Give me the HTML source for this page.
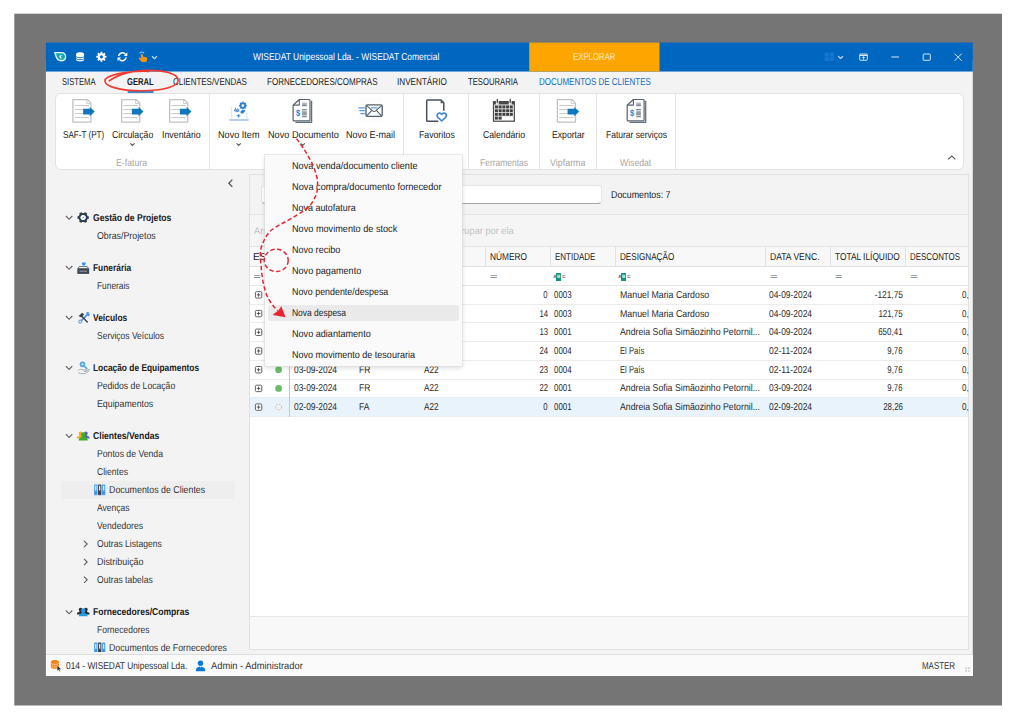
<!DOCTYPE html>
<html lang="pt">
<head>
<meta charset="utf-8">
<title>WISEDAT Unipessoal Lda. - WISEDAT Comercial</title>
<style>
html,body{margin:0;padding:0}
body{width:1024px;height:720px;overflow:hidden;background:#fff;position:relative;font-family:"Liberation Sans",sans-serif;font-size:10px;text-rendering:geometricPrecision;color:#1b1b1b}
.sec{position:absolute;left:0;top:0;width:1024px;height:720px}
.sec div,.sec span,.sec svg,.sec b,.sec i{position:absolute;box-sizing:border-box}
.t{white-space:nowrap;transform-origin:0 50%;line-height:14px;height:14px;font-style:normal}
svg{overflow:visible}
.eq{font-size:12.5px;font-weight:700;color:#8b939a;transform:scaleY(0.62);transform-origin:50% 50%;width:7.3px;text-align:center}
.abc{width:12px;height:8.4px;font-size:4.6px;line-height:8.4px;color:#555}
.abc i{left:0;top:0;font-style:normal;width:3px;text-align:center;font-weight:700}
.abc b{left:3px;top:0;width:5px;height:8.4px;background:#0e9384;color:#e8fffb;text-align:center;font-weight:700;border-radius:0.6px}

</style>
</head>
<body>
<div class="sec" id="frame">
<svg style="left:0;top:0" width="1024" height="720" viewBox="0 0 1024 720"><rect x="14.3" y="13.7" width="987.7" height="691.8" fill="#757575"/><rect x="45.9" y="60" width="926.9" height="616" fill="#f3f3f3"/><rect x="45.9" y="42.5" width="926.9" height="29.05" fill="#0067c0"/><rect x="529.25" y="42.5" width="130.25" height="29.05" fill="#ffa500"/></svg>
</div>
<header class="sec" id="title">
<span class="t" style="left:252.5px;top:51px;color:#ffffff;transform:scaleX(0.845);">WISEDAT Unipessoal Lda. - WISEDAT Comercial</span>
<span class="t" style="left:572.5px;top:51px;color:#ffe9c4;transform:scaleX(0.780);">EXPLORAR</span>
<svg style="left:0;top:0" width="1024" height="720" viewBox="0 0 1024 720" fill="none">
<!-- app logo -->
<path d="M54.7 52.6 L61.2 52.6 C64.2 52.6 65.6 54.5 65.6 56.7 C65.6 59.2 63.8 60.7 61.2 60.7 C58.3 60.7 56.8 59 56.2 56.7 Z" fill="#12a9b4" stroke="#e4f3fb" stroke-width="1.35" stroke-linejoin="round"/>
<path d="M61.9 55.3 A1.7 1.7 0 1 0 61.9 58.3 A1.9 1.9 0 0 1 61.9 55.3 Z" fill="#dff6f6"/>
<!-- database -->
<g fill="#ffffff">
<path d="M76.1 54 C76.1 51.7 84.1 51.7 84.1 54 L84.1 55.7 C84.1 57.9 76.1 57.9 76.1 55.7 Z"/>
<path d="M76.1 56.7 C76.1 58.6 84.1 58.6 84.1 56.7 L84.1 57.9 C84.1 59.8 76.1 59.8 76.1 57.9 Z"/>
<path d="M76.1 58.8 C76.1 60.7 84.1 60.7 84.1 58.8 L84.1 60 C84.1 61.9 76.1 61.9 76.1 60 Z"/>
</g>
<!-- gear -->
<g transform="translate(101.4 56.8)">
<g fill="#ffffff">
<circle r="3.5"/>
<rect x="-0.95" y="-5" width="1.9" height="10" rx="0.3"/>
<rect x="-0.95" y="-5" width="1.9" height="10" rx="0.3" transform="rotate(45)"/>
<rect x="-0.95" y="-5" width="1.9" height="10" rx="0.3" transform="rotate(90)"/>
<rect x="-0.95" y="-5" width="1.9" height="10" rx="0.3" transform="rotate(135)"/>
</g>
<circle r="1.6" fill="#0067c0"/>
</g>
<!-- refresh -->
<g stroke="#ffffff" stroke-width="1.5" stroke-linecap="butt">
<path d="M118.6 56 A3.9 3.9 0 0 1 125.3 54"/>
<path d="M126.2 57.4 A3.9 3.9 0 0 1 119.5 59.4"/>
</g>
<path d="M127.3 52.3 L127.3 56 L123.6 56 Z" fill="#ffffff"/>
<path d="M117.5 61.1 L117.5 57.4 L121.2 57.4 Z" fill="#ffffff"/>
<!-- hand -->
<path d="M139.6 53.3 A2.5 2.5 0 0 1 144 53.3" stroke="#9fc8ee" stroke-width="1.1"/>
<path d="M140.8 54.9 C140.9 53.8 142.6 53.7 142.8 54.8 L143.3 56.8 L146 57.2 C146.9 57.4 147.2 58 147.1 58.9 L146.8 60.9 C146.6 61.6 146.2 61.9 145.5 61.9 L142.3 61.9 C141.6 61.9 141.2 61.6 140.8 61.1 L138.9 58.7 C138.5 57.9 139.4 57.2 140.1 57.8 L141.2 58.7 Z" fill="#ff9408"/>
<!-- chevron -->
<path d="M152 56.2 L154.5 58.6 L157 56.2" stroke="#c2dbf4" stroke-width="1.2"/>
<!-- window controls -->
<g fill="#1577cf">
<rect x="824.7" y="52.6" width="4.2" height="3.9"/><rect x="829.6" y="52.6" width="4.2" height="3.9"/>
<rect x="824.7" y="57.1" width="4.2" height="3.9"/><rect x="829.6" y="57.1" width="4.2" height="3.9"/>
</g>
<path d="M838.2 56.2 L840.6 58.5 L843 56.2" stroke="#c2dbf4" stroke-width="1.2"/>
<rect x="859.7" y="54" width="7.6" height="6.3" rx="1" stroke="#eaf3fb" stroke-width="0.9"/>
<path d="M859.7 55.4 H867.3" stroke="#eaf3fb" stroke-width="1.1"/>
<path d="M863.5 59.6 V56.8 M862.1 58 L863.5 56.7 L864.9 58" stroke="#eaf3fb" stroke-width="0.8"/>
<path d="M891.3 57 H899" stroke="#eef5fc" stroke-width="0.9"/>
<rect x="923.2" y="54" width="7.1" height="6.3" rx="0.8" stroke="#eef5fc" stroke-width="0.9"/>
<path d="M954.6 53.6 L961.7 60.8 M961.7 53.6 L954.6 60.8" stroke="#eef5fc" stroke-width="0.9"/>
</svg>

</header>
<nav class="sec" id="tabs" role="tablist">
<span class="t" style="left:62px;top:76px;transform:scaleX(0.763);">SISTEMA</span>
<span class="t" style="left:127px;top:76px;font-weight:700;transform:scaleX(0.764);">GERAL</span>
<svg style="left:0;top:0" width="1024" height="720" viewBox="0 0 1024 720"><rect x="127.6" y="91.3" width="26" height="1.5" rx="0.5" fill="#0067c0"/></svg>
<span class="t" style="left:172.5px;top:76px;transform:scaleX(0.795);">CLIENTES/VENDAS</span>
<span class="t" style="left:266.75px;top:76px;transform:scaleX(0.802);">FORNECEDORES/COMPRAS</span>
<span class="t" style="left:396.75px;top:76px;transform:scaleX(0.814);">INVENTÁRIO</span>
<span class="t" style="left:468.25px;top:76px;transform:scaleX(0.769);">TESOURARIA</span>
<span class="t" style="left:538.75px;top:76px;color:#0f6cbd;transform:scaleX(0.796);">DOCUMENTOS DE CLIENTES</span>
</nav>
<div class="sec" id="ribbon" role="toolbar">
<div style="left:55px;top:92.8px;width:908.6px;height:77.0px;background:#ffffff;border:1px solid #e2e2e2;border-radius:6px;"></div>
<div style="left:209.0px;top:94px;width:1.0px;height:75px;background:#e4e4e4;"></div>
<div style="left:403.25px;top:94px;width:1.0px;height:75px;background:#e4e4e4;"></div>
<div style="left:468.25px;top:94px;width:1.0px;height:75px;background:#e4e4e4;"></div>
<div style="left:538.75px;top:94px;width:1.0px;height:75px;background:#e4e4e4;"></div>
<div style="left:596.25px;top:94px;width:1.0px;height:75px;background:#e4e4e4;"></div>
<div style="left:674.5px;top:94px;width:1.0px;height:75px;background:#e4e4e4;"></div>
<span class="t" style="left:63px;top:129px;transform:scaleX(0.810);">SAF-T (PT)</span>
<span class="t" style="left:112px;top:129px;transform:scaleX(0.873);">Circulação</span>
<span class="t" style="left:161.5px;top:129px;transform:scaleX(0.882);">Inventário</span>
<span class="t" style="left:115.75px;top:157px;color:#a6a6a6;transform:scaleX(0.871);">E-fatura</span>
<span class="t" style="left:218px;top:129px;transform:scaleX(0.911);">Novo Item</span>
<span class="t" style="left:267.5px;top:129px;transform:scaleX(0.916);">Novo Documento</span>
<span class="t" style="left:346.25px;top:129px;transform:scaleX(0.900);">Novo E-mail</span>
<span class="t" style="left:418.5px;top:129px;transform:scaleX(0.869);">Favoritos</span>
<span class="t" style="left:483px;top:129px;transform:scaleX(0.868);">Calendário</span>
<span class="t" style="left:479.5px;top:157px;color:#a6a6a6;transform:scaleX(0.847);">Ferramentas</span>
<span class="t" style="left:551.75px;top:129px;transform:scaleX(0.866);">Exportar</span>
<span class="t" style="left:549.5px;top:157px;color:#a6a6a6;transform:scaleX(0.891);">Vipfarma</span>
<span class="t" style="left:605.75px;top:129px;transform:scaleX(0.851);">Faturar serviços</span>
<span class="t" style="left:620px;top:157px;color:#a6a6a6;transform:scaleX(0.865);">Wisedat</span>
<svg style="left:0;top:0" width="1024" height="720" viewBox="0 0 1024 720" fill="none">
<defs>
<g id="exp">
<path d="M0.65 0.65 H15.1 L18.75 4.2 V23.15 H0.65 Z" fill="#ffffff" stroke="#c2c2c2" stroke-width="1.3" stroke-linejoin="round"/>
<path d="M14.6 1 V4.6 H18.4" stroke="#cdcdcd" stroke-width="1"/>
<path d="M2.5 6.7 H16.7 M2.5 10.7 H11 M2.5 14.7 H11 M2.5 18.7 H16.7" stroke="#c6c6c6" stroke-width="1"/>
<path d="M10.9 9.9 H17.6 V8 L22.5 12.7 L17.6 17.3 V15.5 H10.9 Z" fill="#0e77bd"/>
</g>
<g id="inv">
<path d="M2.7 23.5 H18.9 V1.9" stroke="#67717e" stroke-width="1.3" stroke-linejoin="round"/>
<path d="M6.6 0.6 H16.4 Q17.3 0.6 17.3 1.5 V21.1 Q17.3 22 16.4 22 H1.3 Q0.4 22 0.4 21.1 V6.4 Z" fill="#fdfdfe" stroke="#58626f" stroke-width="1.2" stroke-linejoin="round"/>
<path d="M0.8 6.2 H6.6 V0.9" stroke="#58626f" stroke-width="1.1" stroke-linejoin="round"/>
<path d="M9.4 4.3 H14.1 M9.4 5.5 H14.1" stroke="#8b929c" stroke-width="0.9"/>
<path d="M9.4 6.8 H14.1 M9.4 10.8 H14.1 M9.4 15.9 H14.1 M9.4 17.8 H14.1" stroke="#5b6470" stroke-width="0.95"/>
<path d="M9.4 12.4 H14.1 M9.4 13.6 H14.1 M9.4 14.6 H14.1" stroke="#8b929c" stroke-width="0.9"/>
<text x="3.2" y="17" font-size="9" font-weight="700" fill="#2f80d2" font-family="Liberation Sans, sans-serif" transform="translate(3.2 0) scale(0.82 1) translate(-3.2 0)">$</text>
</g>
</defs>
<use href="#exp" x="72.2" y="98.9"/>
<use href="#exp" x="121" y="98.9"/>
<use href="#exp" x="169" y="98.9"/>
<use href="#exp" x="556.7" y="98.9"/>
<use href="#inv" x="292.7" y="98.9"/>
<use href="#inv" x="626.8" y="98.9"/>
<!-- novo item -->
<g>
<rect x="229.1" y="118.9" width="19.8" height="2" rx="0.8" fill="#b3cdeb"/>
<rect x="230.9" y="107.1" width="1.1" height="11.8" fill="#dbe7f5"/>
<rect x="246.3" y="112.2" width="1.1" height="6.7" fill="#dbe7f5"/>
<g transform="translate(242.9 105.6)">
<circle r="2.35" stroke="#2f80cc" stroke-width="1.9"/>
<g stroke="#2f80cc" stroke-width="1.25">
<path d="M0 -4 V-2.8 M0 4 V2.8 M-4 0 H-2.8 M4 0 H2.8"/>
<path d="M0 -4 V-2.8 M0 4 V2.8 M-4 0 H-2.8 M4 0 H2.8" transform="rotate(45)"/>
</g>
</g>
<path d="M233.9 111 L235.3 107 L236.3 109.6 L237.6 108 L238.2 109.8 L239.2 108.6 L239.4 111.4 L237 112.3 Z" fill="#5f9fdc"/>
<path d="M240.3 111.7 C241.3 109.9 244 109.6 245.3 110.4 C244.9 112.4 243 113.6 240.9 113.5 Z" fill="#2f80cc"/>
<path d="M235.9 115.5 L238.1 115 L239 113.5 L239.4 115.3 L241 116 L239.3 116.6 L238.2 118.3 L237.8 116.3 Z" fill="#3b8ad3"/>
</g>
<!-- novo e-mail -->
<rect x="359" y="98" width="23.4" height="24.4" fill="#fcfcfc"/>
<rect x="366" y="104.9" width="16.2" height="11.4" rx="1.2" fill="#ffffff" stroke="#56606c" stroke-width="1.35"/>
<path d="M366.6 105.6 L372.6 110.9 Q374.1 112.2 375.6 110.9 L381.6 105.6 M366.7 115.8 L371.8 110.4 M381.5 115.8 L376.4 110.4" stroke="#56606c" stroke-width="1.1"/>
<path d="M358.7 107.8 H364.4 M359.8 110.7 H364.4 M360.8 113.6 H364.4 M371.4 107.8 H377" stroke="#5b9bdc" stroke-width="1.2" stroke-linecap="round"/>
<!-- favoritos -->
<path d="M443.8 110.8 V102.8 L441 100 H427.6 Q426.7 100 426.7 100.9 V120.4 Q426.7 121.3 427.6 121.3 H438.3" fill="none" stroke="#48525e" stroke-width="1.5" stroke-linejoin="round"/>
<path d="M440.6 100.4 V103.2 H443.6 Z" fill="#48525e"/>
<path d="M441.75 121 L437.9 117.3 C435.4 114.6 439.2 111.2 441.75 114.3 C444.3 111.2 448.1 114.6 445.6 117.3 Z" fill="#ffffff" stroke="#3b86cf" stroke-width="1.6" stroke-linejoin="round"/>
<!-- calendario -->
<g>
<rect x="493.5" y="101.7" width="20.8" height="19.5" fill="#ffffff" stroke="#4a4a4a" stroke-width="1.25"/>
<rect x="493.5" y="101.2" width="20.8" height="3.3" fill="#484848"/>
<rect x="494.4" y="105" width="19" height="11.4" fill="#d9d9d9"/>
<rect x="494.4" y="116.2" width="7.6" height="4" fill="#d9d9d9"/>
<rect x="495.9" y="100.8" width="2.8" height="3.9" fill="#ffffff"/><rect x="508.8" y="100.8" width="2.8" height="3.9" fill="#ffffff"/>
<path d="M497.3 99.4 V102.7 M510.2 99.4 V102.7" stroke="#484848" stroke-width="1.3" stroke-linecap="round"/>
<g fill="#404040">
<rect x="494.95" y="105.50" width="2.9" height="2.8"/><rect x="498.70" y="105.50" width="2.9" height="2.8"/><rect x="502.45" y="105.50" width="2.9" height="2.8"/><rect x="506.15" y="105.50" width="2.9" height="2.8"/><rect x="509.85" y="105.50" width="2.9" height="2.8"/><rect x="494.95" y="109.30" width="2.9" height="2.8"/><rect x="498.70" y="109.30" width="2.9" height="2.8"/><rect x="502.45" y="109.30" width="2.9" height="2.8"/><rect x="506.15" y="109.30" width="2.9" height="2.8"/><rect x="509.85" y="109.30" width="2.9" height="2.8"/><rect x="494.95" y="113.00" width="2.9" height="2.8"/><rect x="498.70" y="113.00" width="2.9" height="2.8"/><rect x="502.45" y="113.00" width="2.9" height="2.8"/><rect x="506.15" y="113.00" width="2.9" height="2.8"/><rect x="509.85" y="113.00" width="2.9" height="2.8"/><rect x="494.95" y="116.70" width="2.9" height="2.8"/><rect x="498.70" y="116.70" width="2.9" height="2.8"/>
</g>
</g>
<!-- chevrons under labels -->
<path d="M130.3 143.4 L132.4 145.4 L134.5 143.4 M236.6 143.4 L238.7 145.4 L240.8 143.4 M300.6 143.4 L302.7 145.4 L304.8 143.4" stroke="#5c5c5c" stroke-width="1.25"/>
<!-- collapse -->
<path d="M948.3 159.3 L951.8 155.9 L955.3 159.3" stroke="#4d4d4d" stroke-width="1.1"/>
</svg>

</div>
<aside class="sec" id="nav">
<span class="t" style="left:92.5px;top:212px;font-weight:700;transform:scaleX(0.859);">Gestão de Projetos</span>
<span class="t" style="left:97px;top:230px;color:#333333;transform:scaleX(0.881);">Obras/Projetos</span>
<span class="t" style="left:92.5px;top:262px;font-weight:700;transform:scaleX(0.839);">Funerária</span>
<span class="t" style="left:97px;top:280px;color:#333333;transform:scaleX(0.835);">Funerais</span>
<span class="t" style="left:92.5px;top:312px;font-weight:700;transform:scaleX(0.844);">Veículos</span>
<span class="t" style="left:97px;top:330px;color:#333333;transform:scaleX(0.849);">Serviços Veículos</span>
<span class="t" style="left:92.5px;top:362px;font-weight:700;transform:scaleX(0.837);">Locação de Equipamentos</span>
<span class="t" style="left:97px;top:380px;color:#333333;transform:scaleX(0.863);">Pedidos de Locação</span>
<span class="t" style="left:97px;top:398px;color:#333333;transform:scaleX(0.880);">Equipamentos</span>
<span class="t" style="left:92.5px;top:430px;font-weight:700;transform:scaleX(0.864);">Clientes/Vendas</span>
<span class="t" style="left:97px;top:448px;color:#333333;transform:scaleX(0.866);">Pontos de Venda</span>
<span class="t" style="left:97px;top:466px;color:#333333;transform:scaleX(0.858);">Clientes</span>
<div style="left:61.25px;top:481.1px;width:173.25px;height:17.7px;background:#eeeeee;border-radius:2px;"></div>
<span class="t" style="left:108.75px;top:484px;color:#333333;transform:scaleX(0.883);">Documentos de Clientes</span>
<span class="t" style="left:97px;top:502px;color:#333333;transform:scaleX(0.851);">Avenças</span>
<span class="t" style="left:97px;top:520px;color:#333333;transform:scaleX(0.862);">Vendedores</span>
<span class="t" style="left:97px;top:538px;color:#333333;transform:scaleX(0.856);">Outras Listagens</span>
<span class="t" style="left:97px;top:556px;color:#333333;transform:scaleX(0.890);">Distribuição</span>
<span class="t" style="left:97px;top:574px;color:#333333;transform:scaleX(0.857);">Outras tabelas</span>
<span class="t" style="left:92.5px;top:606px;font-weight:700;transform:scaleX(0.857);">Fornecedores/Compras</span>
<span class="t" style="left:97px;top:624px;color:#333333;transform:scaleX(0.851);">Fornecedores</span>
<span class="t" style="left:108.75px;top:642px;color:#333333;transform:scaleX(0.877);">Documentos de Fornecedores</span>
<svg style="left:0;top:0" width="1024" height="720" viewBox="0 0 1024 720" fill="none">
<defs>
<path id="chv" d="M-3.2 -1.8 L0 1.5 L3.2 -1.8" stroke="#5e5e5e" stroke-width="1.1"/>
<path id="chr" d="M-1.6 -3.1 L1.6 0 L-1.6 3.1" stroke="#5e5e5e" stroke-width="1.1"/>
<g id="bind">
<rect x="0" y="0" width="3.4" height="10.8" rx="0.6" fill="#4aa2f2"/><rect x="1" y="1.4" width="1.3" height="4.6" fill="#d9ecfd"/><rect x="0.5" y="8" width="2.4" height="0.8" fill="#2a7fd0"/>
<rect x="3.9" y="0" width="3.4" height="10.8" rx="0.6" fill="#4d4d4d"/><rect x="4.9" y="1.4" width="1.3" height="4.6" fill="#e6e6e6"/><rect x="4.4" y="8" width="2.4" height="0.8" fill="#2b2b2b"/>
<rect x="7.8" y="0" width="3.4" height="10.8" rx="0.6" fill="#4aa2f2"/><rect x="8.8" y="1.4" width="1.3" height="4.6" fill="#d9ecfd"/><rect x="8.3" y="8" width="2.4" height="0.8" fill="#2a7fd0"/>
</g>
<path id="pers" d="M0 -4.4 C1.5 -4.4 2.2 -3.3 2.2 -2.2 C2.2 -1.2 1.8 -0.5 1.2 0 C1.3 0.9 3.2 1.3 4.2 1.9 L4.6 4 L-4.6 4 L-4.2 1.9 C-3.2 1.3 -1.3 0.9 -1.2 0 C-1.8 -0.5 -2.2 -1.2 -2.2 -2.2 C-2.2 -3.3 -1.5 -4.4 0 -4.4 Z"/>
</defs>
<!-- collapse < -->
<path d="M232.3 179.6 L228.8 183.2 L232.3 186.8" stroke="#5a5a5a" stroke-width="1.35"/>
<!-- group chevrons -->
<use href="#chv" x="69.1" y="217.8"/><use href="#chv" x="69.1" y="267.8"/><use href="#chv" x="69.1" y="317.8"/>
<use href="#chv" x="69.1" y="368"/><use href="#chv" x="69.1" y="436"/><use href="#chv" x="69.1" y="612.3"/>
<use href="#chr" x="85.6" y="544"/><use href="#chr" x="85.6" y="562"/><use href="#chr" x="85.6" y="579.8"/>
<!-- gestao: gear -->
<g transform="translate(83.15 217.5) scale(0.95 0.9) rotate(30)">
<g fill="#2d3e50"><rect x="-1.5" y="-6" width="3" height="2.4" rx="0.4" transform="rotate(0)"/><rect x="-1.5" y="-6" width="3" height="2.4" rx="0.4" transform="rotate(60)"/><rect x="-1.5" y="-6" width="3" height="2.4" rx="0.4" transform="rotate(120)"/><rect x="-1.5" y="-6" width="3" height="2.4" rx="0.4" transform="rotate(180)"/><rect x="-1.5" y="-6" width="3" height="2.4" rx="0.4" transform="rotate(240)"/><rect x="-1.5" y="-6" width="3" height="2.4" rx="0.4" transform="rotate(300)"/></g>
<circle r="3.95" stroke="#2d3e50" stroke-width="2.1" fill="#fbfbfb"/>
<path d="M-0.3 0.7 L0.6 -1" stroke="#3a8be0" stroke-width="0.9"/>
</g>
<!-- funeraria -->
<g>
<path d="M79.6 268.2 L81.4 264.6 H85.6 L87.4 268.2 Z" fill="#ffffff"/>
<path d="M81.8 262.6 H86 L84.9 265.6 H82.5 Z" fill="#3b8fe0"/>
<path d="M77.3 268.2 H89.2 V273.9 H77.3 Z" fill="#3e4a55"/>
<path d="M78.2 268.1 L79.3 266.6 H87.2 L88.3 268.1" stroke="#3e4a55" stroke-width="0.8"/>
<path d="M79.6 271.2 H87" stroke="#aeb6bd" stroke-width="0.8"/>
</g>
<!-- veiculos -->
<g>
<path d="M80.3 321.6 L87.6 314.4" stroke="#4a90d9" stroke-width="1.5"/>
<circle cx="80.2" cy="321.6" r="1.5" fill="#f3f3f3" stroke="#4a90d9" stroke-width="1"/>
<path d="M86.2 313.4 C87 312.6 88.2 312.5 88.2 312.5 L87.4 314.6 L89.3 314.2 C89.3 314.2 89 315.6 87.9 316.1" stroke="#4a90d9" stroke-width="1.1"/>
<path d="M81 315.6 L87.3 321.9" stroke="#3b4046" stroke-width="1.4" stroke-linecap="round"/>
<path d="M78.6 316 L82.2 312.8 L84.2 314.4 L81.2 317.6 Z" fill="#3b4046"/>
</g>
<!-- locacao -->
<g>
<circle cx="82.5" cy="364.3" r="2" stroke="#55a8e2" stroke-width="1.7" fill="#cfe6f8"/>
<path d="M83.9 365.8 L87.2 369.3 M85.4 368.3 L86.6 367.2" stroke="#55a8e2" stroke-width="1.6"/>
<path d="M78.3 370.3 C79.6 369 81.6 369.2 83 370 L86.2 370 C87.2 370 87.3 371.3 86.2 371.4 L84 371.5 M86.9 370.6 L88.6 369.4 C89.3 369 89.9 369.8 89.2 370.5 L86.6 372.8 C85.8 373.4 85 373.6 84 373.6 L80.6 373.6 L78.4 372.8" stroke="#a2a2a2" stroke-width="0.9"/>
</g>
<!-- clientes/vendas -->
<g>
<g transform="translate(80.6 435.2) scale(0.82)"><use href="#pers" fill="#f7a823"/></g>
<g transform="translate(85.9 435.2) scale(0.82)"><use href="#pers" fill="#5866b8"/></g>
<g transform="translate(83.25 436.6) scale(0.98)"><use href="#pers" fill="#3eae2b"/></g>
</g>
<!-- fornecedores/compras -->
<g>
<g transform="translate(80.6 611.3) scale(0.82)"><use href="#pers" fill="#303030"/></g>
<g transform="translate(85.9 611.3) scale(0.82)"><use href="#pers" fill="#303030"/></g>
<g transform="translate(83.25 612.5) scale(0.95)"><use href="#pers" fill="#1e9ceb"/></g>
</g>
<use href="#bind" x="94.1" y="484.4"/>
<use href="#bind" x="94.1" y="642.6"/>
</svg>

</aside>
<main class="sec" id="grid">
<div style="left:249px;top:174px;width:720px;height:475.5px;background:#ffffff;border:1px solid #e0e0e0;"></div>
<div style="left:250px;top:175px;width:718px;height:39.5px;background:#f3f3f3;border-bottom:1px solid #e4e4e4;"></div>
<div style="left:260.5px;top:185px;width:341.5px;height:19px;background:#ffffff;border:1px solid #e6e6e6;border-bottom:1px solid #a6a6a6;border-radius:4px;"></div>
<span class="t" style="left:611px;top:189px;transform:scaleX(0.885);">Documentos: 7</span>
<div style="left:250px;top:214.5px;width:718px;height:32.5px;background:#f5f5f5;border-bottom:1px solid #e4e4e4;"></div>
<span class="t" style="left:253.75px;top:225px;color:#c2c2c2;transform:scaleX(0.923);">Arraste um cabeçalho de coluna para aqui para agrupar por ela</span>
<div style="left:250px;top:247px;width:718px;height:20px;background:#f8f8f8;border-bottom:1px solid #e0e0e0;"></div>
<div style="left:355.0px;top:247px;width:1.0px;height:20px;background:#e2e2e2;"></div>
<div style="left:420.0px;top:247px;width:1.0px;height:20px;background:#e2e2e2;"></div>
<div style="left:485.0px;top:247px;width:1.0px;height:20px;background:#e2e2e2;"></div>
<div style="left:550.0px;top:247px;width:1.0px;height:20px;background:#e2e2e2;"></div>
<div style="left:615.0px;top:247px;width:1.0px;height:20px;background:#e2e2e2;"></div>
<div style="left:765.0px;top:247px;width:1.0px;height:20px;background:#e2e2e2;"></div>
<div style="left:830.0px;top:247px;width:1.0px;height:20px;background:#e2e2e2;"></div>
<div style="left:904.5px;top:247px;width:1.0px;height:20px;background:#e2e2e2;"></div>
<span class="t" style="left:253px;top:251px;">ESTADO</span>
<span class="t" style="left:294.75px;top:251px;">DATA</span>
<span class="t" style="left:359.75px;top:251px;">TIPO DOC.</span>
<span class="t" style="left:424.75px;top:251px;">SÉRIE</span>
<span class="t" style="left:489.75px;top:251px;transform:scaleX(0.832);">NÚMERO</span>
<span class="t" style="left:554.75px;top:251px;transform:scaleX(0.796);">ENTIDADE</span>
<span class="t" style="left:619.75px;top:251px;transform:scaleX(0.813);">DESIGNAÇÃO</span>
<span class="t" style="left:769.5px;top:251px;transform:scaleX(0.854);">DATA VENC.</span>
<span class="t" style="left:834.5px;top:251px;transform:scaleX(0.834);">TOTAL ILÍQUIDO</span>
<span class="t" style="left:909.5px;top:251px;transform:scaleX(0.791);">DESCONTOS</span>
<div style="left:250px;top:267px;width:718px;height:19px;background:#ffffff;border-bottom:1px solid #e6e6e6;"></div>
<span class="t eq" style="left:253.4px;top:270.15px">=</span>
<span class="t eq" style="left:290.4px;top:270.15px">=</span>
<span class="t eq" style="left:355.4px;top:270.15px">=</span>
<span class="t eq" style="left:420.4px;top:270.15px">=</span>
<span class="t eq" style="left:490.0px;top:270.15px">=</span>
<span class="t eq" style="left:770.15px;top:270.15px">=</span>
<span class="t eq" style="left:834.9px;top:270.15px">=</span>
<span class="t eq" style="left:910.15px;top:270.15px">=</span>
<span class="abc" style="left:553.2px;top:272.5px"><i>A</i><b>B</b><i style="left:9px">C</i></span>
<span class="abc" style="left:618.2px;top:272.5px"><i>A</i><b>B</b><i style="left:9px">C</i></span>
<div style="left:250px;top:286.0px;width:718px;height:18.71px;background:#ffffff;border-bottom:1px solid #ececec;"></div>
<span class="t" style="left:293.75px;top:289px;color:#2a2a2a;transform:scaleX(0.841);">04-09-2024</span>
<span class="t" style="left:358.75px;top:289px;color:#2a2a2a;transform:scaleX(0.850);">FR</span>
<span class="t" style="left:424.25px;top:289px;color:#2a2a2a;transform:scaleX(0.815);">A22</span>
<span class="t" style="right:476px;top:289px;color:#2a2a2a;transform:scaleX(0.773);transform-origin:100% 50%;">0</span>
<span class="t" style="left:554.25px;top:289px;color:#2a2a2a;transform:scaleX(0.787);">0003</span>
<span class="t" style="left:619.5px;top:289px;color:#2a2a2a;transform:scaleX(0.882);">Manuel Maria Cardoso</span>
<span class="t" style="left:769px;top:289px;color:#2a2a2a;transform:scaleX(0.841);">04-09-2024</span>
<span class="t" style="right:121.4px;top:289px;color:#2a2a2a;transform:scaleX(0.831);transform-origin:100% 50%;">-121,75</span>
<span class="t" style="left:961.5px;top:289px;color:#2a2a2a;transform:scaleX(0.800);">0,</span>
<div style="left:250px;top:304.71px;width:718px;height:18.71px;background:#ffffff;border-bottom:1px solid #ececec;"></div>
<span class="t" style="left:293.75px;top:308px;color:#2a2a2a;transform:scaleX(0.841);">04-09-2024</span>
<span class="t" style="left:358.75px;top:308px;color:#2a2a2a;transform:scaleX(0.850);">FS</span>
<span class="t" style="left:424.25px;top:308px;color:#2a2a2a;transform:scaleX(0.815);">A22</span>
<span class="t" style="right:476px;top:308px;color:#2a2a2a;transform:scaleX(0.773);transform-origin:100% 50%;">14</span>
<span class="t" style="left:554.25px;top:308px;color:#2a2a2a;transform:scaleX(0.787);">0003</span>
<span class="t" style="left:619.5px;top:308px;color:#2a2a2a;transform:scaleX(0.882);">Manuel Maria Cardoso</span>
<span class="t" style="left:769px;top:308px;color:#2a2a2a;transform:scaleX(0.841);">04-09-2024</span>
<span class="t" style="right:121.4px;top:308px;color:#2a2a2a;transform:scaleX(0.791);transform-origin:100% 50%;">121,75</span>
<span class="t" style="left:961.5px;top:308px;color:#2a2a2a;transform:scaleX(0.800);">0,</span>
<div style="left:250px;top:323.42px;width:718px;height:18.71px;background:#ffffff;border-bottom:1px solid #ececec;"></div>
<span class="t" style="left:293.75px;top:326px;color:#2a2a2a;transform:scaleX(0.841);">04-09-2024</span>
<span class="t" style="left:358.75px;top:326px;color:#2a2a2a;transform:scaleX(0.850);">FT</span>
<span class="t" style="left:424.25px;top:326px;color:#2a2a2a;transform:scaleX(0.815);">A22</span>
<span class="t" style="right:476px;top:326px;color:#2a2a2a;transform:scaleX(0.773);transform-origin:100% 50%;">13</span>
<span class="t" style="left:554.25px;top:326px;color:#2a2a2a;transform:scaleX(0.787);">0001</span>
<span class="t" style="left:619.5px;top:326px;color:#2a2a2a;transform:scaleX(0.874);">Andreia Sofia Simãozinho Petornil...</span>
<span class="t" style="left:769px;top:326px;color:#2a2a2a;transform:scaleX(0.841);">04-09-2024</span>
<span class="t" style="right:121.4px;top:326px;color:#2a2a2a;transform:scaleX(0.798);transform-origin:100% 50%;">650,41</span>
<span class="t" style="left:961.5px;top:326px;color:#2a2a2a;transform:scaleX(0.800);">0,</span>
<div style="left:250px;top:342.13px;width:718px;height:18.71px;background:#ffffff;border-bottom:1px solid #ececec;"></div>
<span class="t" style="left:293.75px;top:345px;color:#2a2a2a;transform:scaleX(0.841);">03-09-2024</span>
<span class="t" style="left:358.75px;top:345px;color:#2a2a2a;transform:scaleX(0.850);">FR</span>
<span class="t" style="left:424.25px;top:345px;color:#2a2a2a;transform:scaleX(0.815);">A22</span>
<span class="t" style="right:476px;top:345px;color:#2a2a2a;transform:scaleX(0.773);transform-origin:100% 50%;">24</span>
<span class="t" style="left:554.25px;top:345px;color:#2a2a2a;transform:scaleX(0.787);">0004</span>
<span class="t" style="left:619.5px;top:345px;color:#2a2a2a;transform:scaleX(0.765);">El País</span>
<span class="t" style="left:769px;top:345px;color:#2a2a2a;transform:scaleX(0.853);">02-11-2024</span>
<span class="t" style="right:121.4px;top:345px;color:#2a2a2a;transform:scaleX(0.776);transform-origin:100% 50%;">9,76</span>
<span class="t" style="left:961.5px;top:345px;color:#2a2a2a;transform:scaleX(0.800);">0,</span>
<div style="left:250px;top:360.84px;width:718px;height:18.71px;background:#ffffff;border-bottom:1px solid #ececec;"></div>
<span class="t" style="left:293.75px;top:364px;color:#2a2a2a;transform:scaleX(0.841);">03-09-2024</span>
<span class="t" style="left:358.75px;top:364px;color:#2a2a2a;transform:scaleX(0.850);">FR</span>
<span class="t" style="left:424.25px;top:364px;color:#2a2a2a;transform:scaleX(0.815);">A22</span>
<span class="t" style="right:476px;top:364px;color:#2a2a2a;transform:scaleX(0.773);transform-origin:100% 50%;">23</span>
<span class="t" style="left:554.25px;top:364px;color:#2a2a2a;transform:scaleX(0.787);">0004</span>
<span class="t" style="left:619.5px;top:364px;color:#2a2a2a;transform:scaleX(0.765);">El País</span>
<span class="t" style="left:769px;top:364px;color:#2a2a2a;transform:scaleX(0.853);">02-11-2024</span>
<span class="t" style="right:121.4px;top:364px;color:#2a2a2a;transform:scaleX(0.776);transform-origin:100% 50%;">9,76</span>
<span class="t" style="left:961.5px;top:364px;color:#2a2a2a;transform:scaleX(0.800);">0,</span>
<div style="left:250px;top:379.55px;width:718px;height:18.71px;background:#ffffff;border-bottom:1px solid #ececec;"></div>
<span class="t" style="left:293.75px;top:382px;color:#2a2a2a;transform:scaleX(0.841);">03-09-2024</span>
<span class="t" style="left:358.75px;top:382px;color:#2a2a2a;transform:scaleX(0.850);">FR</span>
<span class="t" style="left:424.25px;top:382px;color:#2a2a2a;transform:scaleX(0.815);">A22</span>
<span class="t" style="right:476px;top:382px;color:#2a2a2a;transform:scaleX(0.773);transform-origin:100% 50%;">22</span>
<span class="t" style="left:554.25px;top:382px;color:#2a2a2a;transform:scaleX(0.787);">0001</span>
<span class="t" style="left:619.5px;top:382px;color:#2a2a2a;transform:scaleX(0.874);">Andreia Sofia Simãozinho Petornil...</span>
<span class="t" style="left:769px;top:382px;color:#2a2a2a;transform:scaleX(0.841);">03-09-2024</span>
<span class="t" style="right:121.4px;top:382px;color:#2a2a2a;transform:scaleX(0.776);transform-origin:100% 50%;">9,76</span>
<span class="t" style="left:961.5px;top:382px;color:#2a2a2a;transform:scaleX(0.800);">0,</span>
<div style="left:250px;top:398.26px;width:718px;height:18.71px;background:#e9f3fc;border-bottom:1px solid #ececec;"></div>
<span class="t" style="left:293.75px;top:401px;color:#2a2a2a;transform:scaleX(0.841);">02-09-2024</span>
<span class="t" style="left:358.75px;top:401px;color:#2a2a2a;transform:scaleX(0.850);">FA</span>
<span class="t" style="left:424.25px;top:401px;color:#2a2a2a;transform:scaleX(0.815);">A22</span>
<span class="t" style="right:476px;top:401px;color:#2a2a2a;transform:scaleX(0.773);transform-origin:100% 50%;">0</span>
<span class="t" style="left:554.25px;top:401px;color:#2a2a2a;transform:scaleX(0.787);">0001</span>
<span class="t" style="left:619.5px;top:401px;color:#2a2a2a;transform:scaleX(0.874);">Andreia Sofia Simãozinho Petornil...</span>
<span class="t" style="left:769px;top:401px;color:#2a2a2a;transform:scaleX(0.841);">02-09-2024</span>
<span class="t" style="right:121.4px;top:401px;color:#2a2a2a;transform:scaleX(0.795);transform-origin:100% 50%;">28,26</span>
<span class="t" style="left:961.5px;top:401px;color:#2a2a2a;transform:scaleX(0.800);">0,</span>
<svg style="left:0;top:0" width="1024" height="720" viewBox="0 0 1024 720" fill="none"><g transform="translate(254.9 291.16)"><rect x="0.5" y="0.5" width="6.4" height="6.4" rx="1.1" fill="#ffffff" stroke="#5a5a5a" stroke-width="0.95"/><path d="M1.9 3.7h3.6M3.7 1.9v3.6" stroke="#4a4a4a" stroke-width="0.9"/></g><circle cx="278.6" cy="294.86" r="3.35" fill="#69bd68"/><g transform="translate(254.9 309.86)"><rect x="0.5" y="0.5" width="6.4" height="6.4" rx="1.1" fill="#ffffff" stroke="#5a5a5a" stroke-width="0.95"/><path d="M1.9 3.7h3.6M3.7 1.9v3.6" stroke="#4a4a4a" stroke-width="0.9"/></g><circle cx="278.6" cy="313.56" r="3.35" fill="#69bd68"/><g transform="translate(254.9 328.57)"><rect x="0.5" y="0.5" width="6.4" height="6.4" rx="1.1" fill="#ffffff" stroke="#5a5a5a" stroke-width="0.95"/><path d="M1.9 3.7h3.6M3.7 1.9v3.6" stroke="#4a4a4a" stroke-width="0.9"/></g><circle cx="278.6" cy="332.27" r="3.35" fill="#69bd68"/><g transform="translate(254.9 347.29)"><rect x="0.5" y="0.5" width="6.4" height="6.4" rx="1.1" fill="#ffffff" stroke="#5a5a5a" stroke-width="0.95"/><path d="M1.9 3.7h3.6M3.7 1.9v3.6" stroke="#4a4a4a" stroke-width="0.9"/></g><circle cx="278.6" cy="350.99" r="3.35" fill="#69bd68"/><g transform="translate(254.9 366.0)"><rect x="0.5" y="0.5" width="6.4" height="6.4" rx="1.1" fill="#ffffff" stroke="#5a5a5a" stroke-width="0.95"/><path d="M1.9 3.7h3.6M3.7 1.9v3.6" stroke="#4a4a4a" stroke-width="0.9"/></g><circle cx="278.6" cy="369.7" r="3.35" fill="#69bd68"/><g transform="translate(254.9 384.7)"><rect x="0.5" y="0.5" width="6.4" height="6.4" rx="1.1" fill="#ffffff" stroke="#5a5a5a" stroke-width="0.95"/><path d="M1.9 3.7h3.6M3.7 1.9v3.6" stroke="#4a4a4a" stroke-width="0.9"/></g><circle cx="278.6" cy="388.4" r="3.35" fill="#69bd68"/><g transform="translate(254.9 403.42)"><rect x="0.5" y="0.5" width="6.4" height="6.4" rx="1.1" fill="#ffffff" stroke="#5a5a5a" stroke-width="0.95"/><path d="M1.9 3.7h3.6M3.7 1.9v3.6" stroke="#4a4a4a" stroke-width="0.9"/></g><circle cx="278.6" cy="407.12" r="2.95" fill="none" stroke="#f3bd6a" stroke-width="0.95" stroke-dasharray="1.7 1.1"/></svg>
<div style="left:289.3px;top:247px;width:1.2px;height:170px;background:#c6c6c6;"></div>
<div style="left:616px;top:0px;width:-616px;height:0px;"></div>
<div style="left:250px;top:616px;width:718px;height:32.5px;background:#f8f8f8;border-top:1px solid #e6e6e6;"></div>
</main>
<footer class="sec" id="status">
<div style="left:47px;top:651.8px;width:202px;height:2.7px;background:#f3f3f3;"></div>
<div style="left:46px;top:654px;width:927px;height:22px;background:#fafafa;border-top:1px solid #dedede;"></div>
<span class="t" style="left:65.75px;top:660px;color:#333333;transform:scaleX(0.838);">014 - WISEDAT Unipessoal Lda.</span>
<span class="t" style="left:210.75px;top:660px;color:#333333;transform:scaleX(0.933);">Admin - Administrador</span>
<span class="t" style="left:922px;top:660px;color:#333333;transform:scaleX(0.792);">MASTER</span>
<svg style="left:0;top:0" width="1024" height="720" viewBox="0 0 1024 720" fill="none">
<g fill="#f5861f">
<path d="M50.8 661.7 C50.8 659.4 59 659.4 59 661.7 L59 667 C59 669.4 50.8 669.4 50.8 667 Z"/>
</g>
<path d="M50.9 663.3 C51.8 664.9 58 664.9 58.9 663.3 M50.9 665.6 C51.8 667.2 58 667.2 58.9 665.6" stroke="#fbd3ae" stroke-width="0.7"/>
<path d="M57.2 665.6 L57.2 671 L58.6 669.8 L59.6 671.6 L60.4 671.2 L59.5 669.4 L61.2 669.2 Z" fill="#2b2b2b" stroke="#fafafa" stroke-width="0.3"/>
<g fill="#0a78d7">
<circle cx="200.5" cy="663.3" r="2.7"/>
<path d="M195.8 671.2 L196.2 668.6 C197 667.3 198.6 667 199.4 666.4 L200.5 667.5 L201.6 666.4 C202.4 667 204 667.3 204.8 668.6 L205.2 671.2 Z"/>
</g>
<g fill="#b9b9b9">
<rect x="965.4" y="667.4" width="1.4" height="1.4"/><rect x="968.2" y="667.4" width="1.4" height="1.4"/>
<rect x="965.4" y="670.2" width="1.4" height="1.4"/><rect x="968.2" y="670.2" width="1.4" height="1.4"/>
</g>
</svg>

</footer>
<div class="sec" id="menu" role="menu">
<div style="left:264.5px;top:154.5px;width:197.5px;height:211.0px;background:#fafafa;box-shadow:0 0 0 0.6px #dcdcdc,0 2px 5px rgba(0,0,0,0.14);"></div>
<div style="left:268px;top:305px;width:191px;height:15.5px;background:#eaeaea;border-radius:3px;"></div>
<span class="t" style="left:292.25px;top:160px;color:#222222;transform:scaleX(0.914);">Nova venda/documento cliente</span>
<span class="t" style="left:292.25px;top:181px;color:#222222;transform:scaleX(0.921);">Nova compra/documento fornecedor</span>
<span class="t" style="left:292.25px;top:202px;color:#222222;transform:scaleX(0.896);">Nova autofatura</span>
<span class="t" style="left:292.25px;top:223px;color:#222222;transform:scaleX(0.915);">Novo movimento de stock</span>
<span class="t" style="left:292.25px;top:244px;color:#222222;transform:scaleX(0.904);">Novo recibo</span>
<span class="t" style="left:292.25px;top:265px;color:#222222;transform:scaleX(0.909);">Novo pagamento</span>
<span class="t" style="left:292.25px;top:286px;color:#222222;transform:scaleX(0.888);">Novo pendente/despesa</span>
<span class="t" style="left:292.25px;top:307px;color:#222222;transform:scaleX(0.845);">Nova despesa</span>
<span class="t" style="left:292.25px;top:328px;color:#222222;transform:scaleX(0.908);">Novo adiantamento</span>
<span class="t" style="left:292.25px;top:349px;color:#222222;transform:scaleX(0.903);">Novo movimento de tesouraria</span>
</div>
<div class="sec" id="annot">
<svg style="left:0;top:0" width="1024" height="720" viewBox="0 0 1024 720" fill="none">
<path d="M109.2 80.9 C118 74.5 133 70.6 148.7 70.4 C166 70.2 178.3 74.4 178.2 80.6 C178.1 86.8 162 90.9 141 90.8 C120 90.7 104.9 86.4 104.9 80.9 C104.9 75.6 124 70.6 149 71.4" stroke="#f0392f" stroke-width="1.6" stroke-linecap="round"/>
<path d="M296.5 138.6 C303 147.5 309.6 157 313.2 166.1 C315.6 172.3 317.6 177.6 317.6 182.8 C317.6 188 317.4 192.6 315.3 196.7 C313.6 200.2 311.4 204.3 308.3 207.1 C303.5 211.4 297 215 291.7 218.2 C285 222.2 278.5 225 272.2 229.5 C268.4 232.3 265.8 236.4 263.9 240.8 C262.3 244.4 260.6 248 260.4 252 C260.2 256.6 260.6 261.2 261.1 265.8 C261.7 271.4 262 277 263.2 282.5 C264.4 287.8 265.6 293.2 268 297.8 C270.3 302.3 273.4 306.4 277.6 310.6" stroke="#e62530" stroke-width="1.5" stroke-dasharray="4.4 2.5"/>
<ellipse cx="276.2" cy="260.4" rx="12" ry="11.2" stroke="#e62530" stroke-width="1.5" stroke-dasharray="4.4 2.5"/>
<path d="M285.6 317.3 L281.2 306 C279.8 309 278 311 277 311.6 C275.8 312.4 274.2 313.4 272.8 315 Z" fill="#e62530"/>
</svg>

</div>
</body>
</html>
